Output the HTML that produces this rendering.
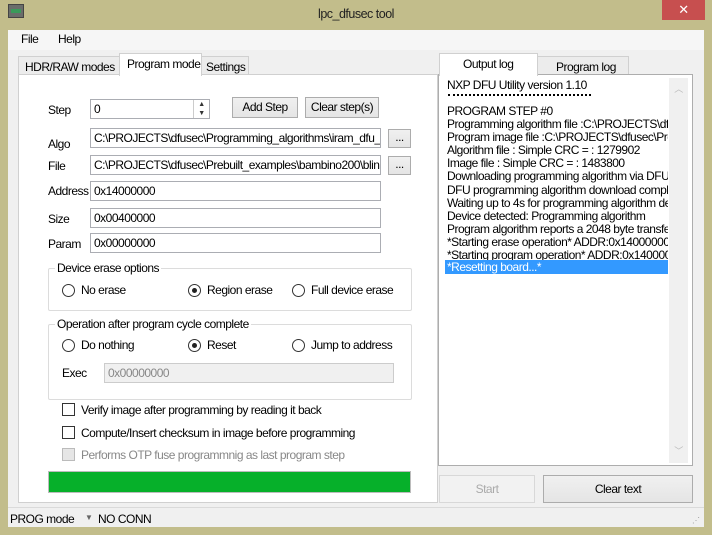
<!DOCTYPE html>
<html><head><style>
*{box-sizing:border-box;margin:0;padding:0}
body{width:712px;height:535px;background:#c2bd8b;font-family:"Liberation Sans",sans-serif;font-size:12px;color:#000;position:relative;overflow:hidden;letter-spacing:-0.5px}
.a{position:absolute;white-space:nowrap}
.in{position:absolute;background:#fff;border:1px solid #abadb3;padding:1px 3px;height:20px;line-height:16px;overflow:hidden;white-space:nowrap}
.btn{position:absolute;background:linear-gradient(#f0f0f0,#e5e5e5);border:1px solid #acacac;text-align:center;line-height:18px;white-space:nowrap}
.rad{position:absolute;width:13px;height:13px;border:1px solid #333;border-radius:50%;background:#fff}
.rad.on:after{content:"";position:absolute;left:3px;top:3px;width:5px;height:5px;border-radius:50%;background:#222}
.cb{position:absolute;width:13px;height:13px;border:1px solid #333;background:#fff}
.grp{position:absolute;border:1px solid #dcdcdc;border-radius:2px}
.gl{position:absolute;background:#fff;padding:0 2px;white-space:nowrap}
.log{position:absolute;left:447px;line-height:13.1px;white-space:nowrap;overflow:hidden;width:221px}
</style></head><body>
<div class="a" style="left:8px;top:4px;width:16px;height:14px;background:#6a6d6a;border:1px solid #444"><div style="margin:4px 2px;height:4px;background:#3a9a5a"></div></div>
<div class="a" style="left:0;width:712px;top:7px;text-align:center;font-size:12.5px;color:#222">lpc_dfusec tool</div>
<div class="a" style="left:662px;top:0;width:43px;height:20px;background:#c74f4f;color:#fff;text-align:center;line-height:19px;font-size:13px">✕</div>
<div class="a" style="left:8px;top:30px;width:696px;height:497px;background:#f0f0f0"></div>
<div class="a" style="left:8px;top:30px;width:696px;height:20px;background:#f6f6f6"></div>
<div class="a" style="left:21px;top:32px">File</div>
<div class="a" style="left:58px;top:32px">Help</div>
<!-- left tabs -->
<div class="a" style="left:18px;top:56px;width:102px;height:19px;border:1px solid #d0d0d0;background:#ececec;padding:3px 0 0 6px">HDR/RAW modes</div>
<div class="a" style="left:201px;top:56px;width:48px;height:19px;border:1px solid #d0d0d0;background:#ececec;padding:3px 0 0 4px">Settings</div>
<div class="a" style="left:18px;top:74px;width:420px;height:429px;background:#fff;border:1px solid #d0d0d0"></div>
<div class="a" style="left:119px;top:53px;width:83px;height:23px;border:1px solid #d0d0d0;border-bottom:none;background:#fff;padding:3px 0 0 7px">Program mode</div>
<div class="a" style="left:48px;top:103px">Step</div>
<div class="in" style="left:90px;top:99px;width:120px">0</div>
<div class="a" style="left:193px;top:100px;width:16px;height:18px;border-left:1px solid #ccc;font-size:7px;text-align:center;line-height:9px;color:#333">▲<br>▼</div>
<div class="btn" style="left:232px;top:97px;width:66px;height:21px">Add Step</div>
<div class="btn" style="left:305px;top:97px;width:74px;height:21px">Clear step(s)</div>
<div class="a" style="left:48px;top:137px">Algo</div>
<div class="in" style="left:90px;top:128px;width:291px">C:\PROJECTS\dfusec\Programming_algorithms\iram_dfu_util</div>
<div class="btn" style="left:388px;top:129px;width:23px;height:19px;line-height:14px">...</div>
<div class="a" style="left:48px;top:159px">File</div>
<div class="in" style="left:90px;top:155px;width:291px">C:\PROJECTS\dfusec\Prebuilt_examples\bambino200\blinky</div>
<div class="btn" style="left:388px;top:156px;width:23px;height:19px;line-height:14px">...</div>
<div class="a" style="left:48px;top:184px">Address</div>
<div class="in" style="left:90px;top:181px;width:291px">0x14000000</div>
<div class="a" style="left:48px;top:212px">Size</div>
<div class="in" style="left:90px;top:208px;width:291px">0x00400000</div>
<div class="a" style="left:48px;top:237px">Param</div>
<div class="in" style="left:90px;top:233px;width:291px">0x00000000</div>
<div class="grp" style="left:48px;top:268px;width:364px;height:43px"></div>
<div class="gl" style="left:55px;top:261px">Device erase options</div>
<div class="rad" style="left:62px;top:284px"></div><div class="a" style="left:81px;top:283px">No erase</div>
<div class="rad on" style="left:188px;top:284px"></div><div class="a" style="left:207px;top:283px">Region erase</div>
<div class="rad" style="left:292px;top:284px"></div><div class="a" style="left:311px;top:283px">Full device erase</div>
<div class="grp" style="left:48px;top:324px;width:364px;height:76px"></div>
<div class="gl" style="left:55px;top:317px">Operation after program cycle complete</div>
<div class="rad" style="left:62px;top:339px"></div><div class="a" style="left:81px;top:338px">Do nothing</div>
<div class="rad on" style="left:188px;top:339px"></div><div class="a" style="left:207px;top:338px">Reset</div>
<div class="rad" style="left:292px;top:339px"></div><div class="a" style="left:311px;top:338px">Jump to address</div>
<div class="a" style="left:62px;top:366px">Exec</div>
<div class="in" style="left:104px;top:363px;width:290px;background:#f0f0f0;border-color:#ccc;color:#888">0x00000000</div>
<div class="cb" style="left:62px;top:403px"></div><div class="a" style="left:81px;top:403px">Verify image after programming by reading it back</div>
<div class="cb" style="left:62px;top:426px"></div><div class="a" style="left:81px;top:426px">Compute/Insert checksum in image before programming</div>
<div class="cb" style="left:62px;top:448px;background:#e6e6e6;border-color:#bbb"></div><div class="a" style="left:81px;top:448px;color:#888">Performs OTP fuse programmnig as last program step</div>
<div class="a" style="left:48px;top:471px;width:363px;height:22px;background:#06b02a;border:1px solid #bcbcbc"></div>
<!-- right -->
<div class="a" style="left:537px;top:56px;width:92px;height:19px;border:1px solid #d0d0d0;background:#ececec;padding:3px 0 0 18px">Program log</div>
<div class="a" style="left:438px;top:74px;width:255px;height:392px;background:#fff;border:1px solid #adadad"></div>
<div class="a" style="left:439px;top:53px;width:99px;height:23px;border:1px solid #d0d0d0;border-bottom:none;background:#fff;padding:3px 0 0 23px">Output log</div>
<div class="a" style="left:669px;top:78px;width:19px;height:385px;background:#f0f0f0;color:#bbb;font-size:9px;text-align:center"><div style="margin-top:4px">︿</div><div style="position:absolute;bottom:6px;width:19px">﹀</div></div>
<div class="log" style="top:79px">NXP DFU Utility version 1.10</div>
<div class="a" style="left:448px;top:94px;width:143px;height:2px;border-top:2px dotted #000"></div>
<div class="log" style="top:105px">PROGRAM STEP #0<br>Programming algorithm file :C:\PROJECTS\dfusec<br>Program image file :C:\PROJECTS\dfusec\Prebuilt<br>Algorithm file : Simple CRC = : 1279902<br>Image file : Simple CRC = : 1483800<br>Downloading programming algorithm via DFU R<br>DFU programming algorithm download complete<br>Waiting up to 4s for programming algorithm detect<br>Device detected: Programming algorithm<br>Program algorithm reports a 2048 byte transfer bu<br>*Starting erase operation* ADDR:0x14000000,<br>*Starting program operation* ADDR:0x1400000</div>
<div class="a" style="left:445px;top:260px;width:223px;height:14px;background:#3399ff"></div>
<div class="log" style="top:261px;color:#fff">*Resetting board...*</div>
<div class="btn" style="left:439px;top:475px;width:96px;height:28px;line-height:26px;color:#aaa;background:#f2f2f2;border-color:#d8d8d8">Start</div>
<div class="btn" style="left:543px;top:475px;width:150px;height:28px;line-height:26px">Clear text</div>
<div class="a" style="left:8px;top:507px;width:696px;height:1px;background:#dadada"></div>
<div class="a" style="left:10px;top:512px">PROG mode</div>
<div class="a" style="left:85px;top:513px;font-size:8px;color:#666">▼</div>
<div class="a" style="left:98px;top:512px">NO CONN</div>
<div class="a" style="left:692px;top:516px;font-size:8px;color:#999;letter-spacing:0">⋰</div>
</body></html>
